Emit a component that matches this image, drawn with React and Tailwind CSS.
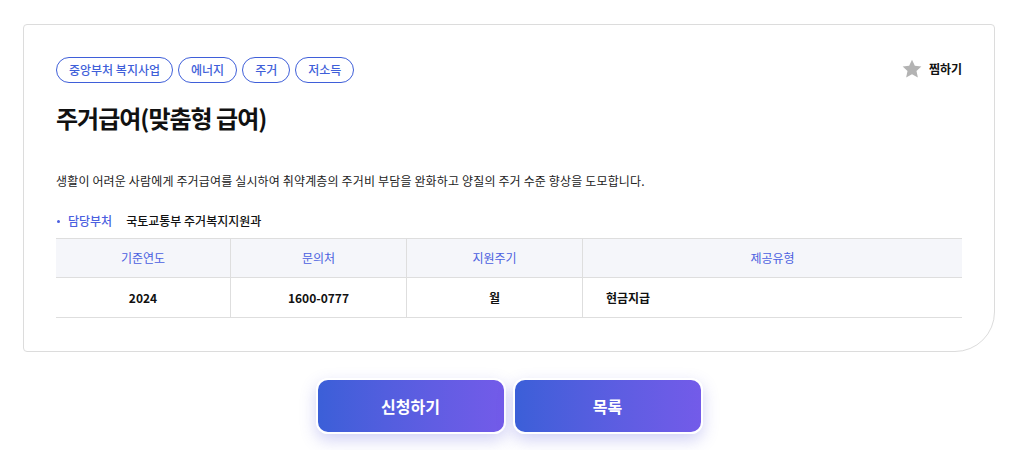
export default function App() {
  const font = { fontFamily: '"Noto Sans CJK KR", "Noto Sans", sans-serif' };
  const tags = ['중앙부처 복지사업', '에너지', '주거', '저소득'];
  const heads = ['기준연도', '문의처', '지원주기', '제공유형'];

  return (
    <div style={font} className="min-h-screen bg-white pl-[23px] pr-[19px] pt-[24px] text-[#111]">
      {/* Card */}
      <div className="border border-[#dcdcdc] rounded-[4px] rounded-br-[40px] px-[32px] pt-[32px] pb-[33px]">
        <div className="flex items-start justify-between">
          <div className="flex gap-[5px]">
            {tags.map((t) => (
              <span key={t} className="h-[26px] px-[12px] flex items-center rounded-full border border-[#3f5fd9] text-[#3f5fd9] text-[12px] font-medium">
                {t}
              </span>
            ))}
          </div>
          <button className="flex items-center gap-[6px] mt-[1px] text-[12px] font-bold text-[#111]">
            <svg width="22" height="22" viewBox="0 0 24 24" fill="#b3b3b3">
              <path d="M12 1.8l3.1 6.6 7.1.8-5.3 4.9 1.5 7.1L12 17.6l-6.4 3.6 1.5-7.1L1.8 9.2l7.1-.8z" />
            </svg>
            찜하기
          </button>
        </div>

        <h1 className="mt-[18px] text-[24px] font-bold leading-[34px] tracking-[-1px]">주거급여(맞춤형 급여)</h1>

        <p className="mt-[36px] text-[12px] leading-[20px] tracking-[0.15px] text-[#222]">
          생활이 어려운 사람에게 주거급여를 실시하여 취약계층의 주거비 부담을 완화하고 양질의 주거 수준 향상을 도모합니다.
        </p>

        <div className="mt-[21px] flex items-center text-[12px] leading-[18px]">
          <span className="w-[3px] h-[3px] rounded-full bg-[#4b5fe0] ml-[1px] mr-[8px]" />
          <span className="text-[#4b5fe0] font-medium mr-[14px]">담당부처</span>
          <span className="font-medium text-[#111]">국토교통부 주거복지지원과</span>
        </div>

        <div className="mt-[8px] grid grid-cols-[175px_176px_176px_1fr] border-t border-[#dedede] text-[12px]">
          {heads.map((h, i) => (
            <div key={h} className={`h-[39px] flex items-center justify-center bg-[#f5f6fa] text-[#4b5fe0] border-b border-[#dedede] ${i < 3 ? 'border-r' : ''}`}>
              {h}
            </div>
          ))}
          <div className="h-[40px] flex items-center justify-center font-bold border-b border-r border-[#dedede]">2024</div>
          <div className="h-[40px] flex items-center justify-center font-bold border-b border-r border-[#dedede]">1600-0777</div>
          <div className="h-[40px] flex items-center justify-center font-bold border-b border-r border-[#dedede]">월</div>
          <div className="h-[40px] flex items-center pl-[23px] font-bold border-b border-[#dedede]">현금지급</div>
        </div>
      </div>

      {/* Buttons */}
      <div className="mt-[26px] flex justify-center gap-[7px]">
        {['신청하기', '목록'].map((b) => (
          <button
            key={b}
            className="w-[190px] h-[56px] rounded-[12px] border-2 border-white bg-gradient-to-r from-[#3b5fd8] to-[#735be9] text-white text-[16px] font-bold shadow-[0_6px_16px_rgba(90,90,220,0.28)]"
          >
            {b}
          </button>
        ))}
      </div>
    </div>
  );
}
